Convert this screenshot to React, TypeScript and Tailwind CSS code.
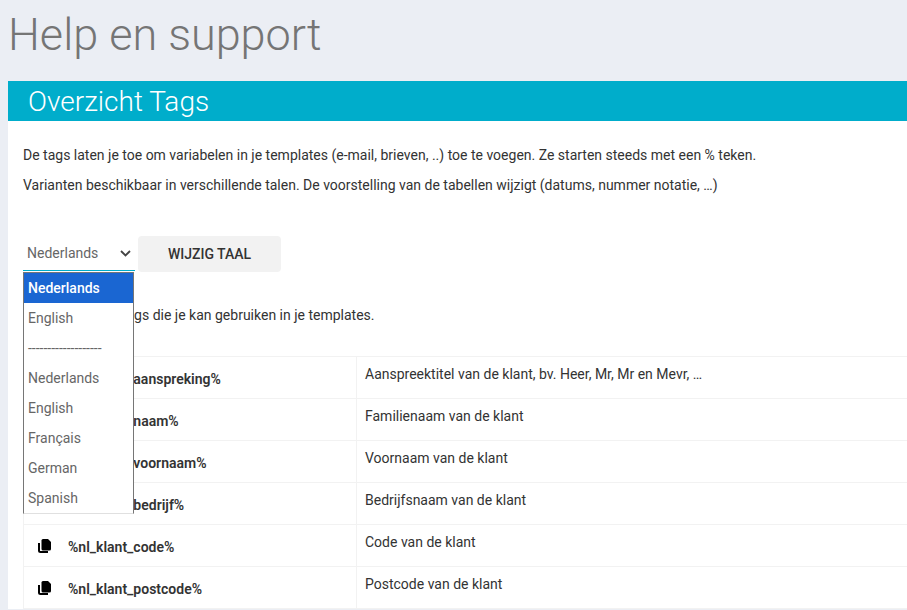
const languages = ["Nederlands", "English", "-------------------", "Nederlands", "English", "Français", "German", "Spanish"];

const tags = [
  { tag: "%nl_klant_aanspreking%", desc: "Aanspreektitel van de klant, bv. Heer, Mr, Mr en Mevr, …" },
  { tag: "%nl_klant_naam%", desc: "Familienaam van de klant" },
  { tag: "%nl_klant_voornaam%", desc: "Voornaam van de klant" },
  { tag: "%nl_klant_bedrijf%", desc: "Bedrijfsnaam van de klant" },
  { tag: "%nl_klant_code%", desc: "Code van de klant" },
  { tag: "%nl_klant_postcode%", desc: "Postcode van de klant" },
];

const CopyIcon = () => (
  <svg width="13" height="14" viewBox="0 0 13 14" className="mb-[3px] text-black">
    <path d="M5 0h5l3 3v7a1.500 1.500 0 0 1-1.500 1.500H5A1.500 1.500 0 0 1 3.500 10V1.500A1.500 1.500 0 0 1 5 0z" fill="currentColor" />
    <path d="M1 4v7.500A1.500 1.500 0 0 0 2.500 13H10" fill="none" stroke="currentColor" strokeWidth="2" />
  </svg>
);

const App = () => {
  return (
    <div className="h-[610px] w-[907px] overflow-hidden bg-[#ebeef4] font-['Roboto',sans-serif]">
      <h1 className="h-[81px] pl-2 pt-[8px] text-[45px] leading-[54px] font-light text-[#757575]">
        Help en support
      </h1>

      <div className="ml-2 w-[1000px] bg-white">
        <div className="h-10 bg-[#00adcb] pl-5 text-[28px] leading-[42px] font-light text-white">
          Overzicht Tags
        </div>

        <div className="pl-[15px] pt-6 text-sm text-[#333333]">
          <p className="h-5 leading-5">
            De tags laten je toe om variabelen in je templates (e-mail, brieven, ..) toe te voegen. Ze starten steeds met een % teken.
          </p>
          <p className="mt-[10px] h-5 leading-5">
            Varianten beschikbaar in verschillende talen. De voorstelling van de tabellen wijzigt (datums, nummer notatie, …)
          </p>

          <div className="relative mt-[41px] flex h-[36px] items-start">
            <div className="flex h-[35px] w-[112px] items-center justify-between border-b border-[#00adcb] pl-1 pr-[4px] text-[#666666]">
              <span>Nederlands</span>
              <svg width="11" height="7" viewBox="0 0 11 7" className="text-[#444444]">
                <path d="M1 1l4.500 4.500L10 1" fill="none" stroke="currentColor" strokeWidth="1.800" />
              </svg>
            </div>
            <button className="ml-[3px] h-[36px] w-[143px] rounded-sm bg-[#f2f2f2] text-sm font-medium text-[#333333]">
              WIJZIG TAAL
            </button>

            {/* open select list */}
            <ul className="absolute left-0 top-[36px] z-10 w-[111px] border border-[#767676] border-b-[#e0e0e0] bg-white text-sm text-[#666666]">
              {languages.map((lang, index) => (
                <li
                  key={index}
                  className={`h-[30px] pl-1 leading-[30px] ${index === 0 ? "bg-[#1a66d2] font-medium text-white" : ""}`}
                >
                  {lang}
                </li>
              ))}
            </ul>
          </div>

          <p className="mt-[33px] h-5 pl-[1px] leading-5">
            Hier vind je alle tags die je kan gebruiken in je templates.
          </p>

          <table className="mt-[31px] w-[960px] table-fixed border-collapse">
            <tbody>
              {tags.map((row) => (
                <tr key={row.tag} className="h-[42px] border border-[#f2f2f2]">
                  <td className="w-[333px] border-r border-[#f2f2f2] pl-[14px]">
                    <div className="flex items-center pt-[3px]">
                      <CopyIcon />
                      <span className="ml-[17px] text-sm font-semibold text-[#333333]">{row.tag}</span>
                    </div>
                  </td>
                  <td className="pl-2 pt-[7px] align-top leading-5">{row.desc}</td>
                </tr>
              ))}
            </tbody>
          </table>
        </div>
      </div>
    </div>
  );
};

export default App;
